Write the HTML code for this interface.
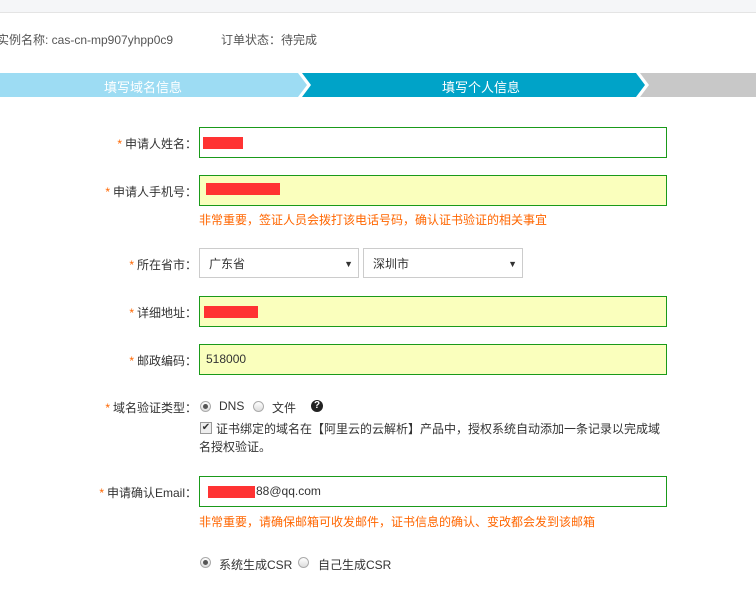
<!DOCTYPE html>
<html><head><meta charset="utf-8"><style>
body{margin:0;width:756px;height:612px;background:#fff;font-family:"Liberation Sans","Noto Sans CJK SC",sans-serif;font-size:12px;color:#333;position:relative;overflow:hidden}
.a{position:absolute}
.lbl{position:absolute;right:559px;text-align:right;white-space:nowrap;color:#333}
.lbl b{color:#f60;font-weight:normal;margin-right:3px}
.inp{position:absolute;left:199px;height:29px;border:1px solid #1a9a1a;box-sizing:content-box;line-height:29px;padding-left:6px;width:460px}
.y{background:#faffbd}
.red{position:absolute;background:#f33;height:12px}
.hint{position:absolute;left:199px;color:#f60;white-space:nowrap}
.sel{position:absolute;top:248px;height:30px;border:1px solid #ccc;line-height:30px;padding-left:9px;box-sizing:border-box}
.sel:after{content:"▼";position:absolute;right:5px;top:0;font-size:9px;color:#333}
.rad{position:absolute;width:11px;height:11px;border-radius:50%;border:1px solid #aaa;background:linear-gradient(#fff,#ddd);box-sizing:border-box}
.rad.on:after{content:"";position:absolute;left:2px;top:2px;width:5px;height:5px;border-radius:50%;background:#555}
</style></head><body>
<div class="a" style="left:0;top:0;width:756px;height:12px;background:#f5f6f8;border-bottom:1px solid #e4e4e4"></div>
<div class="a" style="left:-3px;top:31px;color:#555">实例名称: cas-cn-mp907yhpp0c9</div>
<div class="a" style="left:221px;top:31px;color:#555">订单状态：待完成</div>
<svg class="a" style="left:0;top:73px" width="756" height="24">
<polygon points="0,0 298,0 307,12 298,24 0,24" fill="#9ddcf3"/>
<polygon points="302,0 636,0 645,12 636,24 302,24 311,12" fill="#00a3c8"/>
<polygon points="640,0 756,0 756,24 640,24 649,12" fill="#c8c8c8"/>
</svg>
<div class="a" style="left:104px;top:77px;color:#fff;font-size:13px">填写域名信息</div>
<div class="a" style="left:442px;top:77px;color:#fff;font-size:13px">填写个人信息</div>

<div class="lbl" style="top:135px"><b>*</b>申请人姓名：</div>
<div class="inp" style="top:127px"></div><div class="red" style="left:203px;top:137px;width:40px"></div>

<div class="lbl" style="top:183px"><b>*</b>申请人手机号：</div>
<div class="inp y" style="top:175px"></div><div class="red" style="left:206px;top:183px;width:74px"></div>
<div class="hint" style="top:211px">非常重要，签证人员会拨打该电话号码，确认证书验证的相关事宜</div>

<div class="lbl" style="top:256px"><b>*</b>所在省市：</div>
<div class="sel" style="left:199px;width:160px">广东省</div>
<div class="sel" style="left:363px;width:160px">深圳市</div>

<div class="lbl" style="top:304px"><b>*</b>详细地址：</div>
<div class="inp y" style="top:296px"></div><div class="red" style="left:204px;top:306px;width:54px"></div>

<div class="lbl" style="top:352px"><b>*</b>邮政编码：</div>
<div class="inp y" style="top:344px">518000</div>

<div class="lbl" style="top:399px"><b>*</b>域名验证类型：</div>
<div class="rad on" style="left:200px;top:401px"></div><div class="a" style="left:219px;top:399px">DNS</div>
<div class="rad" style="left:253px;top:401px"></div><div class="a" style="left:272px;top:399px">文件</div>
<div class="a" style="left:311px;top:400px;width:12px;height:12px;border-radius:50%;background:#222;color:#fff;font-size:10px;font-weight:bold;text-align:center;line-height:12px">?</div>
<div class="a" style="left:200px;top:422px;width:10px;height:10px;border:1px solid #999;background:#eee;font-size:10px;line-height:10px;text-align:center">✔</div>
<div class="a" style="left:216px;top:420px;width:460px;line-height:18px">证书绑定的域名在【阿里云的云解析】产品中，授权系统自动添加一条记录以完成域</div>
<div class="a" style="left:199px;top:438px;line-height:18px">名授权验证。</div>

<div class="lbl" style="top:484px"><b>*</b>申请确认Email：</div>
<div class="inp" style="top:476px"></div><div class="red" style="left:208px;top:486px;width:47px"></div>
<div class="a" style="left:256px;top:476px;line-height:31px">88@qq.com</div>
<div class="hint" style="top:513px">非常重要，请确保邮箱可收发邮件，证书信息的确认、变改都会发到该邮箱</div>

<div class="rad on" style="left:200px;top:557px"></div><div class="a" style="left:219px;top:556px">系统生成CSR</div>
<div class="rad" style="left:298px;top:557px"></div><div class="a" style="left:318px;top:556px">自己生成CSR</div>
</body></html>
